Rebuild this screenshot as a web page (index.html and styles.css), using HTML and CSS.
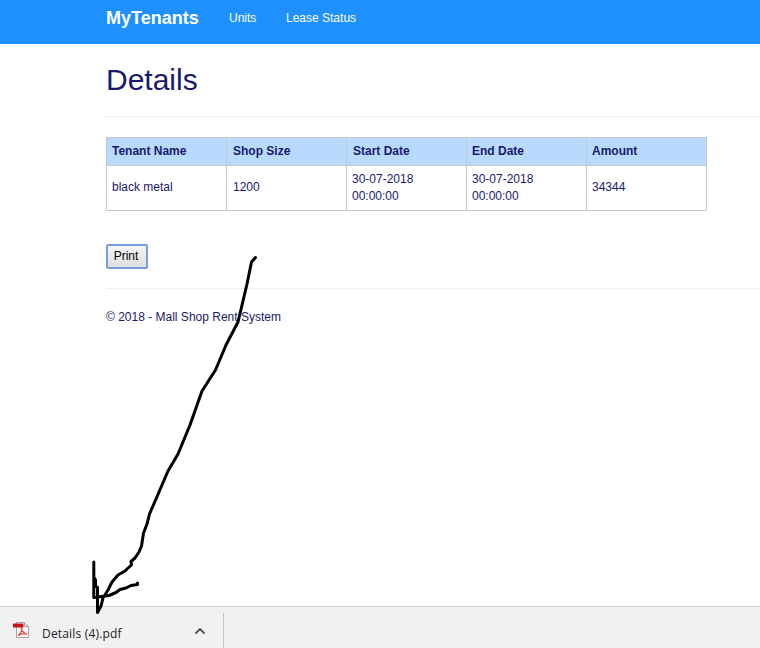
FILE: index.html
```html
<!DOCTYPE html>
<html lang="en">
<head>
<meta charset="utf-8">
<title>Details</title>
<link rel="stylesheet" href="styles.css">
</head>
<body>
<nav class="navbar">
  <a class="brand">MyTenants</a>
  <a class="link units">Units</a>
  <a class="link lease">Lease Status</a>
</nav>
<main class="content">
  <h1>Details</h1>
  <hr>
  <table>
    <thead>
      <tr><th>Tenant Name</th><th class="shop">Shop Size</th><th class="shop">Start Date</th><th>End Date</th><th>Amount</th></tr>
    </thead>
    <tbody>
      <tr><td>black metal</td><td class="shop">1200</td><td class="date">30-07-2018 00:00:00</td><td class="date">30-07-2018 00:00:00</td><td>34344</td></tr>
    </tbody>
  </table>
  <button class="print">Print</button>
  <hr>
  <footer>© 2018 - Mall Shop Rent System</footer>
</main>
<div class="downloads">
  <div class="item">
    <svg class="pdf" width="18" height="18" viewBox="0 0 18 18">
      <path d="M4.500 1.500h8l4 4v11h-12z" fill="#fcfcfc" stroke="#a2a2a2"/>
      <path d="M12.500 1.500v4h4" fill="#ddd" stroke="#a2a2a2"/>
      <path d="M6 14.500c2-1 4.500-5 3.700-7.500-1.200-.5-.2 4.500 5.300 6.500-2-1.300-5.500-1-9 1z" fill="none" stroke="#e2403c" stroke-width="1.200"/>
      <path d="M1 2.500h10.500v4H1z" fill="#c9151a"/>
    </svg>
    <span class="file">Details (4).pdf</span>
    <svg class="caret" width="12" height="8" viewBox="0 0 12 8"><path d="M1.500 6.500 6 2l4.500 4.500" fill="none" stroke="#505050" stroke-width="1.800"/></svg>
  </div>
</div>
<svg class="arrow" width="760" height="648" viewBox="0 0 760 648">
  <path d="M255.500 257.500 251.500 262 247 284 238 322 226 345 215.500 370 202 391 190 425 178 454 168 471 156 499 149.500 514 147 524 143.500 533 141.500 546 139 552 135 558 131 561.500 131.500 565 127 569 125 571 118 575 112 582 108 590 103 598 101 606 97.500 612.500V587.500L95.500 586V580L93.800 577V562V597.500L109 595.500 116 592.500 120 589.500 126 588 131 585.500 137.500 584.500V583"/>
</svg>
</body>
</html>
```
FILE: styles.css
```css
* { box-sizing: border-box; }
body {
  margin: 0;
  height: 648px;
  display: flex;
  flex-direction: column;
  overflow: hidden;
  background: #fff;
  color: #191970;
  font: 12px/17px "Liberation Sans", Arial, sans-serif;
}
.navbar {
  height: 44px;
  flex: none;
  display: flex;
  padding: 8px 0 0 106px;
  background: #1e90ff;
  color: #fff;
  line-height: 20px;
  white-space: nowrap;
}
.brand { width: 123px; font-size: 18px; font-weight: bold; }
.units { width: 57px; }
.content { flex: 1; padding-left: 106px; }
h1 { margin: 19px 0 20px; font-size: 30px; font-weight: normal; line-height: 33px; }
hr { margin: 0; height: 1px; border: 0; background: #eee; }
table {
  width: 601px;
  margin-top: 20px;
  table-layout: fixed;
  border-collapse: collapse;
}
th, td { border: 1px solid #c8c8c8; text-align: left; padding: 5px; }
th { height: 28px; padding: 0 5px; background: #b8dafe; }
td { height: 45px; padding: 4px 5px 6px; }
.shop { padding-left: 6px; }
td.date { padding: 5px 30px 5px 5px; }
.print {
  display: block;
  width: 42px;
  height: 25px;
  margin: 33px 0 19px;
  padding: 0 2px 1px 0;
  border: 2px solid #769edd;
  border-radius: 2px;
  background: linear-gradient(#f6f6f6, #dedede);
  color: #000;
  font: 12px "Liberation Sans", Arial, sans-serif;
}
footer { margin-top: 20px; }
.downloads {
  height: 42px;
  flex: none;
  padding-top: 6px;
  border-top: 1px solid #d0d0d0;
  background: #f1f1f1;
}
.item {
  width: 224px;
  height: 35px;
  display: flex;
  align-items: center;
  padding-left: 12px;
  border-right: 1px solid #c4c4c4;
  color: #222;
}
.pdf { margin-top: -1px; }
.file { width: 152px; margin: 7px 0 0 12px; font: 12px/18px "Open Sans", sans-serif; letter-spacing: .18px; }
.caret { margin-top: 1px; }
.arrow { position: absolute; top: 0; left: 0; pointer-events: none; }
.arrow path { fill: none; stroke: #000; stroke-width: 3; stroke-linecap: round; stroke-linejoin: round; }
```
